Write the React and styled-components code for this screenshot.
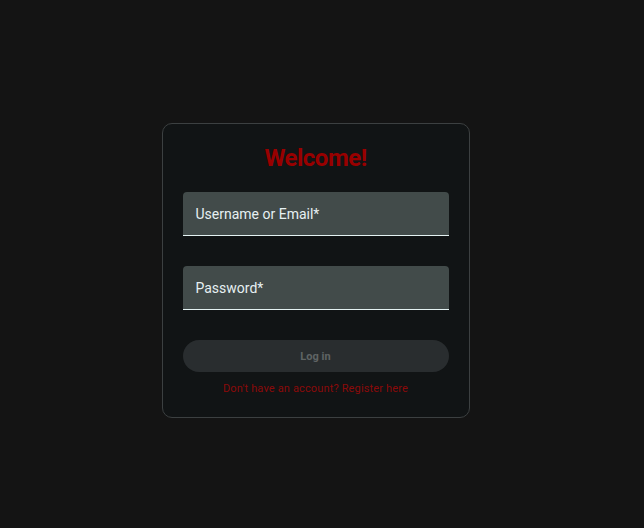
import React from "react"
import styled, { createGlobalStyle } from "styled-components"

const GlobalStyle = createGlobalStyle`
    html, body {
        margin: 0;
        padding: 0;
        background: #141414;
    }
    body {
        font-family: Roboto, "Liberation Sans", sans-serif;
    }
`

const Page = styled.div`
    min-height: 100vh;
    box-sizing: border-box;
    display: flex;
    justify-content: center;
    align-items: center;
    padding: 13px 13px 0 0;
`

const Card = styled.form`
    width: 308px;
    box-sizing: border-box;
    padding: 18px 20px 22px;
    background: #111415;
    border: 1px solid #3c4041;
    border-radius: 10px;
    display: flex;
    flex-direction: column;
`

const Title = styled.h1`
    margin: 0 0 18px;
    text-align: center;
    font-size: 24px;
    font-weight: 700;
    letter-spacing: -0.5px;
    line-height: 32px;
    color: #990000;
`

const Field = styled.div`
    height: 44px;
    box-sizing: border-box;
    display: flex;
    align-items: center;
    padding: 0 12px 0 13px;
    margin-bottom: ${props => props.$gap}px;
    background: #424b4a;
    border-radius: 4px 4px 0 0;
    border-bottom: 1px solid #e4f2f2;
`

const Label = styled.label`
    font-size: 14px;
    font-weight: 400;
    color: #e6f0f2;
`

const Button = styled.button`
    height: 32px;
    border: none;
    border-radius: 16px;
    background: #292d2f;
    color: #5f6464;
    font-family: inherit;
    font-size: 11px;
    font-weight: 700;
    cursor: default;
`

const Hint = styled.a`
    margin-top: 10px;
    text-align: center;
    font-size: 11px;
    letter-spacing: 0.15px;
    color: #8a0a0a;
    text-decoration: none;
`

const App = () => {
    return (
        <>
            <GlobalStyle />
            <Page>
                <Card>
                    <Title>Welcome!</Title>
                    <Field $gap={30}>
                        <Label>Username or Email*</Label>
                    </Field>
                    <Field $gap={30}>
                        <Label>Password*</Label>
                    </Field>
                    <Button type="button" disabled>Log in</Button>
                    <Hint href="#">Don't have an account? Register here</Hint>
                </Card>
            </Page>
        </>
    )
}

export default App
